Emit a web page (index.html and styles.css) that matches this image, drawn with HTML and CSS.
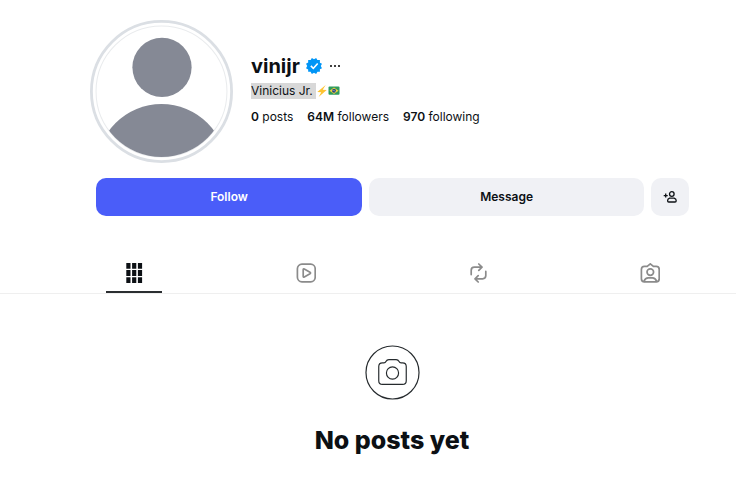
FILE: index.html
```
<!DOCTYPE html>
<html lang="en">
<head>
<meta charset="utf-8">
<meta name="viewport" content="width=device-width, initial-scale=1">
<title>vinijr</title>
<link rel="stylesheet" href="styles.css">
</head>
<body>
<main>
  <header class="profile">
    <svg class="avatar" viewBox="0 0 142 142" role="img" aria-label="Profile photo">
      <defs><clipPath id="face"><circle cx="71" cy="71" r="65"/></clipPath></defs>
      <circle cx="71" cy="71" r="69.6" fill="#fff" stroke="#dbdfe4" stroke-width="2.8"/>
      <circle cx="71" cy="71" r="65" fill="none" stroke="#e9ebed"/>
      <g clip-path="url(#face)" fill="#858995">
        <circle cx="71.5" cy="47" r="29.4"/>
        <circle cx="71" cy="148" r="64.5"/>
      </g>
    </svg>
    <div class="details">
      <div class="name-row">
        <h1 class="username">vinijr</h1>
        <svg class="verified" viewBox="0 0 40 40" role="img" aria-label="Verified"><path fill="#0095f6" d="M19.998 3.094 14.638 0l-2.972 5.15H5.432v6.354L0 14.64 3.094 20 0 25.359l5.432 3.137v5.905h5.975L14.638 40l5.36-3.094L25.358 40l3.232-5.6h6.162v-6.01L40 25.359 36.905 20 40 14.641l-5.248-3.03v-6.46h-6.419L25.358 0l-5.36 3.094Z"/><path fill="#fff" d="m18.4 28.7-7.7-7.5 2.8-2.8 4.8 4.7 9.4-10.6 3 2.6Z"/></svg>
        <button class="more" type="button" aria-label="Options"><svg viewBox="0 0 12 4"><circle cx="2" cy="2" r="1"/><circle cx="6" cy="2" r="1"/><circle cx="10" cy="2" r="1"/></svg></button>
      </div>
      <p class="full-name"><span class="selected">Vinicius Jr.&nbsp;</span><svg class="emoji" viewBox="0 0 12 12" role="img" aria-label="Lightning"><path fill="#fec331" d="M9.7 0 1.3 7l4 .2L2.6 12l8.1-6.9-4-.3Z"/></svg><svg class="emoji" viewBox="0 0 12 12" role="img" aria-label="Flag of Brazil"><rect x=".5" y="1.6" width="11" height="8.2" rx="1" fill="#2f9b5c"/><path fill="#f4d13a" d="m6 2.4 4.5 3.3L6 9 1.5 5.7Z"/><circle cx="6" cy="5.7" r="2" fill="#25457f"/><path d="M4.3 5.2q2-.1 3.3 1.4" fill="none" stroke="#fff" stroke-width=".4"/></svg></p>
      <ul class="stats">
        <li><b>0</b> posts</li>
        <li><b>64M</b> followers</li>
        <li><b>970</b> following</li>
      </ul>
    </div>
  </header>

  <div class="actions">
    <button class="button follow" type="button">Follow</button>
    <button class="button message" type="button">Message</button>
    <button class="button similar" type="button" aria-label="Similar accounts"><svg viewBox="0 0 14 14"><path d="M.7 5.6h4M2.7 3.6v4"/><circle cx="8.8" cy="4" r="2.3"/><path d="M6.6 8.2h4.5q2.2.8 2.1 2.6 0 1.2-1.2 1.2H5.8q-1.2 0-1.2-1.2Q4.5 9 6.6 8.2Z"/></svg></button>
  </div>

  <nav class="tabs" aria-label="Profile sections">
    <a class="tab active" href="#posts" aria-label="Posts"><svg viewBox="0 0 20 20"><path fill="#0c1014" d="M2.3 0h4.2v5.8H2.3zM8.1 0h4.2v5.8H8.1zM13.9 0h4.2v5.8h-4.2zM2.3 7.1h4.2v5.8H2.3zM8.1 7.1h4.2v5.8H8.1zM13.9 7.1h4.2v5.8h-4.2zM2.3 14.2h4.2V20H2.3zM8.1 14.2h4.2V20H8.1zM13.9 14.2h4.2V20h-4.2z"/></svg></a>
    <a class="tab" href="#reels" aria-label="Reels"><svg viewBox="0 0 20 20"><rect x="1.4" y="1.2" width="17.8" height="17.6" rx="4.5"/><path d="M7.2 6.7q0-1.2 1.1-.7l5.7 3.2q1.1.8 0 1.6L8.3 14q-1.1.5-1.1-.7Z"/></svg></a>
    <a class="tab" href="#reposts" aria-label="Reposts"><svg viewBox="0 0 20 20"><path d="M3.2 11.6V7.4q0-3.2 3.2-3.2h7.4M10.8 1l3.2 3.2-3.2 3.2M17.8 8.4v4.2q0 3.2-3.2 3.2H7.2M10.2 12.6 7 15.8l3.2 3.2"/></svg></a>
    <a class="tab" href="#tagged" aria-label="Tagged"><svg viewBox="0 0 20 20"><path d="M4.4 3.4h2.8L10.3.8l3.1 2.6h2.8q3 0 3 3v9.4q0 3-3 3H4.4q-3 0-3-3V6.4q0-3 3-3Z"/><circle cx="10.3" cy="9.1" r="3.3"/><path d="M4 18.3q1.2-3.5 4.2-3.5h4.2q3 0 4.2 3.5"/></svg></a>
  </nav>

  <section class="empty" id="posts">
    <svg class="camera" viewBox="0 0 56 56" aria-hidden="true"><circle cx="28" cy="28" r="27"/><path d="M17.8 18.2h1.5q1.4 0 2-1.3 1-2.1 3-2.1h7.4q2 0 3 2.1.6 1.3 2 1.3h1.5q3.8 0 3.8 3.8v14.3q0 3.8-3.8 3.8H17.8q-3.8 0-3.8-3.8V22q0-3.8 3.8-3.8Z"/><circle cx="28" cy="28.5" r="6.2"/></svg>
    <h2>No posts yet</h2>
  </section>
</main>
</body>
</html>
```
FILE: styles.css
```
* {
  box-sizing: border-box;
}

body {
  margin: 0;
  background: #fff;
  color: #0c1014;
  font: 12px/16px Inter, "Liberation Sans", sans-serif;
}

h1,
h2,
p,
ul {
  margin: 0;
  padding: 0;
}

button {
  border: 0;
  font: inherit;
  color: inherit;
  cursor: pointer;
}

svg {
  display: block;
}

.profile {
  display: flex;
  gap: 18px;
  padding: 20px 46px 0 90px;
}

.avatar {
  flex: none;
  width: 143px;
  height: 143px;
}

.details {
  padding-top: 33px;
}

.name-row {
  display: flex;
  align-items: center;
  gap: 6px;
  height: 26px;
}

.username {
  font-size: 20px;
  line-height: 24px;
  font-weight: 700;
}

.verified {
  width: 16px;
  height: 16px;
}

.more {
  padding: 0;
  background: none;
}

.more svg {
  width: 14px;
  height: 4px;
}

.full-name {
  display: flex;
  align-items: center;
  margin-top: 4px;
}

.selected {
  background: #d8d8d8;
}

.emoji {
  width: 12px;
  height: 12px;
}

.stats {
  display: flex;
  gap: 14px;
  margin-top: 10px;
  list-style: none;
}

.stats b {
  font-weight: 600;
}

.actions {
  display: flex;
  gap: 7px;
  margin-top: 15px;
  padding: 0 47px 0 96px;
}

.button {
  display: flex;
  align-items: center;
  justify-content: center;
  height: 38px;
  border-radius: 10px;
  background: #f0f1f5;
  font-weight: 600;
}

.follow {
  flex: 266;
  background: #4a5df9;
  color: #fff;
}

.message {
  flex: 275;
}

.similar {
  flex: none;
  width: 38px;
  padding: 0;
}

.similar svg {
  width: 14px;
  height: 14px;
  fill: none;
  stroke: #0c1014;
  stroke-width: 1.3;
}

.tabs {
  display: flex;
  margin-top: 37px;
  padding-left: 48px;
  border-bottom: 1px solid #efefef;
}

.tab {
  display: flex;
  flex: 1;
  flex-direction: column;
  align-items: center;
  height: 40px;
  padding-top: 10px;
}

.tab svg {
  width: 20px;
  height: 20px;
  fill: none;
  stroke: #8b8b8b;
  stroke-width: 1.7;
  stroke-linecap: round;
  stroke-linejoin: round;
}

.active svg {
  stroke: none;
}

.active::after {
  content: "";
  width: 56px;
  height: 2px;
  margin-top: auto;
  background: #2b2e31;
}

.empty {
  display: flex;
  flex-direction: column;
  align-items: center;
  gap: 24px;
  padding: 51px 0 32px 48px;
}

.camera {
  width: 55px;
  height: 55px;
  fill: none;
  stroke: #252a2d;
  stroke-width: 1.2;
}

.empty h2 {
  font-size: 25px;
  line-height: 32px;
  font-weight: 800;
}
```
